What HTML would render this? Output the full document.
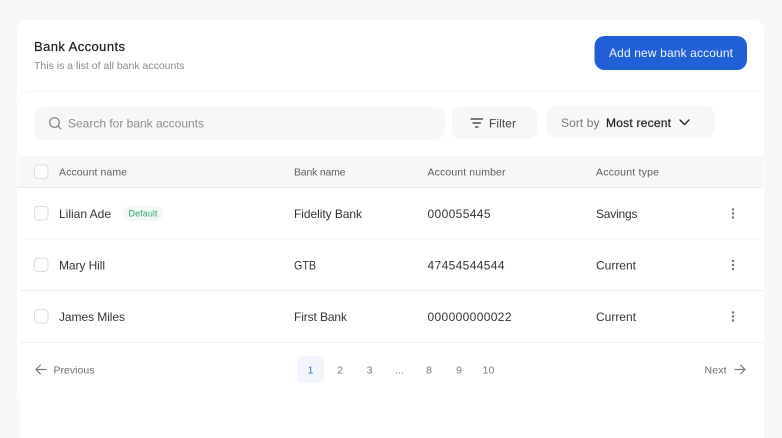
<!DOCTYPE html>
<html><head><meta charset="utf-8"><title>Bank Accounts</title>
<style>
html,body{margin:0;padding:0;width:782px;height:438px;overflow:hidden;background:#f7f7f7}
svg{display:block;filter:blur(.3px)}
text{font-family:"Liberation Sans",sans-serif;font-size:12px;fill:#333}
.h{font-size:10.5px;fill:#5c5c5c}
.c{font-size:12px;fill:#333}
.p{font-size:10.5px;fill:#777}
</style></head><body>
<svg width="782" height="438" viewBox="0 0 782 438" xmlns="http://www.w3.org/2000/svg">
<rect x="-5" y="-5" width="792" height="448" fill="#f7f7f7"/>
<rect x="17" y="20" width="747" height="430" rx="9" fill="#fff"/>
<rect x="17" y="394" width="3" height="50" fill="#fafafa"/>
<path d="M18 103a12 12 0 0 1 12-12H763" fill="none" stroke="#f5f5f5"/>

<text x="34" y="51" textLength="91" lengthAdjust="spacing" style="font-size:13px;fill:#1a1a1a;stroke:#1a1a1a;stroke-width:.2">Bank Accounts</text>
<text x="34" y="69" textLength="150.500" lengthAdjust="spacing" style="font-size:10.5px;fill:#8a8a8a">This is a list of all bank accounts</text>

<rect x="594.500" y="36" width="152.500" height="34" rx="10" fill="#1f60d6"/>
<text x="609" y="57" textLength="124" lengthAdjust="spacing" style="font-size:12px;fill:#f2f6fd">Add new bank account</text>

<rect x="34" y="107" width="411" height="33" rx="10" fill="#f7f7f7"/>
<circle cx="54.500" cy="122.500" r="4.800" fill="none" stroke="#808080" stroke-width="1.200"/>
<path d="M58 126L60.800 128.800" stroke="#808080" stroke-width="1.200" stroke-linecap="round"/>
<text x="68" y="127.500" textLength="136" lengthAdjust="spacing" style="font-size:12px;fill:#8c8c8c">Search for bank accounts</text>

<rect x="452" y="107" width="85" height="32" rx="8" fill="#f7f7f7"/>
<path d="M471 119h11.500M473 123h7.500M475.500 127h2.500" stroke="#333" stroke-width="1.300" stroke-linecap="round" fill="none"/>
<text x="489" y="127.500" textLength="27" lengthAdjust="spacing" style="font-size:12px;fill:#444">Filter</text>

<rect x="546" y="106" width="169" height="32" rx="10" fill="#f7f7f7"/>
<text x="561" y="127" textLength="38.500" lengthAdjust="spacing" style="font-size:12px;fill:#777">Sort by</text>
<text x="606" y="127" textLength="65" lengthAdjust="spacing" style="font-size:12px;fill:#1f1f1f;stroke:#1f1f1f;stroke-width:.2">Most recent</text>
<path d="M680 120l4.500 4.500 4.500-4.500" fill="none" stroke="#222" stroke-width="1.400" stroke-linecap="round" stroke-linejoin="round"/>

<rect x="18" y="156" width="745" height="31" fill="#f7f7f7"/>
<path d="M18 187.500H763M20 290.500H763M20 342.500H763" stroke="#ececec" fill="none"/>
<path d="M20 239H763" stroke="#f4f4f4" fill="none"/>

<g fill="#fff" stroke="#dedede">
<rect x="34.500" y="165" width="13.500" height="13.500" rx="3.500"/>
<rect x="34.500" y="206.500" width="13.500" height="13.500" rx="3.500"/>
<rect x="34.500" y="258" width="13.500" height="13.500" rx="3.500"/>
<rect x="34.500" y="309.500" width="13.500" height="13.500" rx="3.500"/>
</g>

<text class="h" x="59" y="175.500" textLength="68" lengthAdjust="spacing">Account name</text>
<text class="h" x="294" y="175.500" textLength="51.500" lengthAdjust="spacing">Bank name</text>
<text class="h" x="427.500" y="175.500" textLength="78" lengthAdjust="spacing">Account number</text>
<text class="h" x="596" y="175.500" textLength="63" lengthAdjust="spacing">Account type</text>

<text class="c" x="59" y="218" textLength="52" lengthAdjust="spacing">Lilian Ade</text>
<rect x="123" y="206" width="40" height="15" rx="7.500" fill="#f0f9f4"/>
<text x="128.500" y="216.500" textLength="29" lengthAdjust="spacing" style="font-size:9px;fill:#2fa86c">Default</text>
<text class="c" x="294" y="218" textLength="68" lengthAdjust="spacing">Fidelity Bank</text>
<text class="c" x="427.500" y="218" textLength="63" lengthAdjust="spacing">000055445</text>
<text class="c" x="596" y="218" textLength="41.500" lengthAdjust="spacing">Savings</text>

<text class="c" x="59" y="269.500" textLength="46" lengthAdjust="spacing">Mary Hill</text>
<text class="c" x="294" y="269.500" textLength="22" lengthAdjust="spacingAndGlyphs">GTB</text>
<text class="c" x="427.500" y="269.500" textLength="77" lengthAdjust="spacing">47454544544</text>
<text class="c" x="596" y="269.500" textLength="40" lengthAdjust="spacing">Current</text>

<text class="c" x="59" y="321" textLength="66" lengthAdjust="spacing">James Miles</text>
<text class="c" x="294" y="321" textLength="53" lengthAdjust="spacing">First Bank</text>
<text class="c" x="427.500" y="321" textLength="84" lengthAdjust="spacing">000000000022</text>
<text class="c" x="596" y="321" textLength="40" lengthAdjust="spacing">Current</text>

<g fill="#707070">
<circle cx="733" cy="209.500" r="1.200"/><circle cx="733" cy="213.500" r="1.200"/><circle cx="733" cy="217.500" r="1.200"/>
<circle cx="733" cy="261" r="1.200"/><circle cx="733" cy="265" r="1.200"/><circle cx="733" cy="269" r="1.200"/>
<circle cx="733" cy="312.500" r="1.200"/><circle cx="733" cy="316.500" r="1.200"/><circle cx="733" cy="320.500" r="1.200"/>
</g>

<path d="M46 369.500H36.500M40.500 365l-4.500 4.500 4.500 4.500" fill="none" stroke="#777" stroke-width="1.200" stroke-linecap="round" stroke-linejoin="round"/>
<text x="53.500" y="373.500" textLength="41" lengthAdjust="spacing" style="font-size:10.500px;fill:#6e6e6e">Previous</text>

<rect x="297" y="356" width="27" height="27" rx="5" fill="#f2f6fc"/>
<text x="310.500" y="373.500" text-anchor="middle" style="font-size:10.500px;fill:#2b6bd6">1</text>
<g>
<text class="p" x="340" y="373.500" text-anchor="middle">2</text>
<text class="p" x="369.500" y="373.500" text-anchor="middle">3</text>
<text class="p" x="399.500" y="373.500" text-anchor="middle">...</text>
<text class="p" x="429" y="373.500" text-anchor="middle">8</text>
<text class="p" x="459" y="373.500" text-anchor="middle">9</text>
<text class="p" x="488.500" y="373.500" text-anchor="middle">10</text>
</g>

<text x="704.500" y="373.500" textLength="22" lengthAdjust="spacing" style="font-size:10.500px;fill:#6e6e6e">Next</text>
<path d="M735 369.500H744.500M740.500 365l4.500 4.500-4.500 4.500" fill="none" stroke="#777" stroke-width="1.200" stroke-linecap="round" stroke-linejoin="round"/>
</svg>
</body></html>
